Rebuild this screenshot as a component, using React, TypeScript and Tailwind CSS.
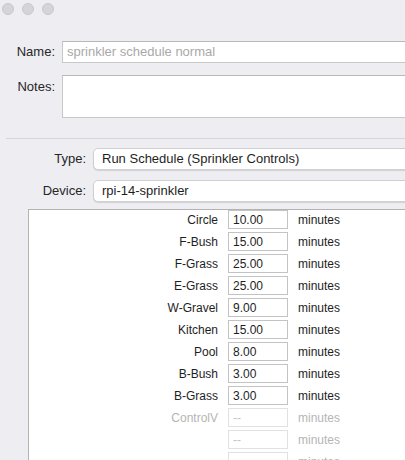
import React from 'react'

const zones = [
  { name: 'Circle', value: '10.00' },
  { name: 'F-Bush', value: '15.00' },
  { name: 'F-Grass', value: '25.00' },
  { name: 'E-Grass', value: '25.00' },
  { name: 'W-Gravel', value: '9.00' },
  { name: 'Kitchen', value: '15.00' },
  { name: 'Pool', value: '8.00' },
  { name: 'B-Bush', value: '3.00' },
  { name: 'B-Grass', value: '3.00' },
  { name: 'ControlV', value: '', disabled: true },
  { name: '', value: '', disabled: true },
  { name: '', value: '', disabled: true },
]

export default function App() {
  return (
    <div className="w-[405px] h-[460px] overflow-hidden bg-[#eeedf2] font-['Liberation_Sans',Arial,sans-serif] text-[#262626]">
      {/* window buttons */}
      <div className="flex gap-2 pl-[2px] pt-[3px]">
        <div className="w-3 h-3 rounded-full bg-[#d5d5d7] border border-[#c9c9cb]" />
        <div className="w-3 h-3 rounded-full bg-[#d5d5d7] border border-[#c9c9cb]" />
        <div className="w-3 h-3 rounded-full bg-[#d5d5d7] border border-[#c9c9cb]" />
      </div>

      {/* name + notes */}
      <div className="mt-[26px] flex items-center gap-[7px]">
        <label className="w-[55px] shrink-0 text-right text-[13px]">Name:</label>
        <div className="w-[400px] h-[22px] shrink-0 bg-white border border-[#c8c8c8] border-t-[#b8b8b8] flex items-center px-[4px] text-[13px] text-[#a9a9a9]">
          sprinkler schedule normal
        </div>
      </div>
      <div className="mt-[12px] flex items-start gap-[7px]">
        <label className="w-[55px] shrink-0 text-right text-[13px] pt-[2px]">Notes:</label>
        <div className="w-[400px] h-[43px] shrink-0 bg-white border border-[#c8c8c8] border-t-[#b8b8b8]" />
      </div>

      <div className="mt-[20px] ml-[6px] h-px bg-[#d6d6d9]" />

      {/* type + device */}
      <div className="mt-[9px] flex items-center gap-[7px]">
        <label className="w-[86px] shrink-0 text-right text-[13px]">Type:</label>
        <div className="w-[400px] h-[22px] shrink-0 bg-white rounded-l-[5px] border border-[#d0d0d0] shadow-[0_1px_1px_rgba(0,0,0,0.12)] flex items-center pl-[8px] text-[13px] text-[#1e1e1e]">
          Run Schedule (Sprinkler Controls)
        </div>
      </div>
      <div className="mt-[10px] flex items-center gap-[7px]">
        <label className="w-[86px] shrink-0 text-right text-[13px]">Device:</label>
        <div className="w-[400px] h-[22px] shrink-0 bg-white rounded-l-[5px] border border-[#d0d0d0] shadow-[0_1px_1px_rgba(0,0,0,0.12)] flex items-center pl-[8px] text-[13px] text-[#1e1e1e]">
          rpi-14-sprinkler
        </div>
      </div>

      {/* zone table */}
      <div className="mt-[7px] ml-[28px] w-[400px] h-[300px] bg-white border-l border-t border-[#b3b3b3] flex flex-col gap-[3px] text-[12px]">
        {zones.map((z, i) => (
          <div key={i} className="flex items-center h-[19px] shrink-0">
            <div className={`w-[189px] shrink-0 text-right ${z.disabled ? 'text-[#b5b5b5]' : 'text-[#1e1e1e]'}`}>{z.name}</div>
            <div
              className={`ml-[10px] w-[60px] h-[19px] shrink-0 bg-white border flex items-center pl-[4px] ${
                z.disabled ? 'border-[#e1e1e1] text-[#c4c4c4]' : 'border-[#c3c3c3] text-[#1e1e1e]'
              }`}
            >
              {z.disabled ? '--' : z.value}
            </div>
            <div className={`ml-[10px] shrink-0 ${z.disabled ? 'text-[#b5b5b5]' : 'text-[#1e1e1e]'}`}>minutes</div>
          </div>
        ))}
      </div>
    </div>
  )
}
